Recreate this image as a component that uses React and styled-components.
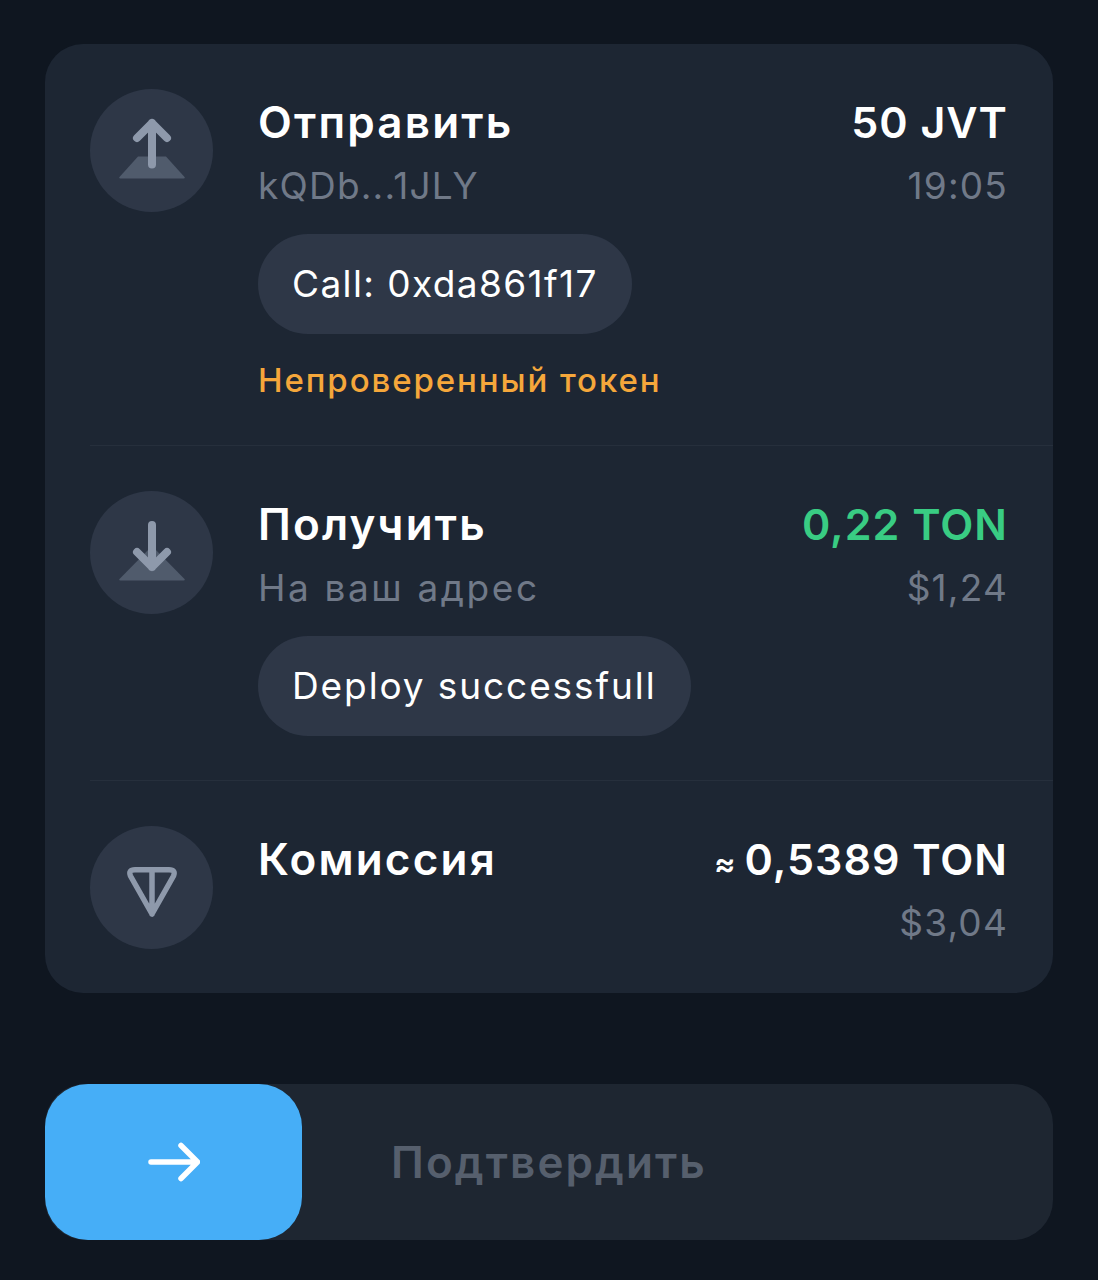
import React from 'react';
import styled, { createGlobalStyle } from 'styled-components';

const GlobalStyle = createGlobalStyle`
  html, body {
    margin: 0;
    padding: 0;
    background: #0f1620;
    font-family: 'Inter', 'Noto Sans', sans-serif;
  }
`;

const UpIcon = () => (
  <svg width="66" height="66" viewBox="0 0 66 66" fill="none">
    <path d="M19 38.5 H47 L65.5 59 Q66.5 60.5 64.5 60.5 H1.5 Q-0.5 60.5 0.5 59 Z" fill="#505b6c" />
    <path d="M33 46.5 V5 M18 20 L33 5 L48 20" stroke="#8e99ab" strokeWidth="8" strokeLinecap="round" strokeLinejoin="round" />
  </svg>
);

const DownIcon = () => (
  <svg width="66" height="66" viewBox="0 0 66 66" fill="none">
    <path d="M33 26 L65.5 59 Q66.5 60.5 64.5 60.5 H1.5 Q-0.5 60.5 0.5 59 Z" fill="#505b6c" />
    <path d="M33 5 V47 M18 32 L33 47 L48 32" stroke="#8e99ab" strokeWidth="8" strokeLinecap="round" strokeLinejoin="round" />
  </svg>
);

const TonIcon = () => (
  <svg width="50" height="60" viewBox="0 0 50 60" fill="none">
    <path d="M25 56 L3.5 18 Q1 11.7 8 11.7 H42 Q49 11.7 46.5 18 Z M25 11.7 V56" stroke="#8e99ab" strokeWidth="5.5" strokeLinejoin="round" strokeLinecap="round" />
  </svg>
);

const ArrowIcon = () => (
  <svg width="52" height="40" viewBox="0 0 52 40" fill="none">
    <path d="M3 20 H49 M33 3.5 L49.5 20 L33 36.5" stroke="#fff" strokeWidth="5.5" strokeLinecap="round" strokeLinejoin="round" />
  </svg>
);

const App = () => (
  <>
    <GlobalStyle />
    <Page>
      <Card>
        <Row $height={402}>
          <Circle><UpIcon /></Circle>
          <Info>
            <Top>
              <Title>Отправить</Title>
              <Amount>50 JVT</Amount>
            </Top>
            <Bottom>
              <Sub>kQDb...1JLY</Sub>
              <Sub>19:05</Sub>
            </Bottom>
            <Bubble>Call: 0xda861f17</Bubble>
            <Warning>Непроверенный токен</Warning>
          </Info>
        </Row>
        <Row $height={335}>
          <Circle><DownIcon /></Circle>
          <Info>
            <Top>
              <Title>Получить</Title>
              <Amount $green>0,22 TON</Amount>
            </Top>
            <Bottom>
              <Sub $wide>На ваш адрес</Sub>
              <Sub>$1,24</Sub>
            </Bottom>
            <Bubble $wide>Deploy successfull</Bubble>
          </Info>
        </Row>
        <Row $height={212} $last>
          <Circle><TonIcon /></Circle>
          <Info>
            <Top>
              <Title>Комиссия</Title>
              <Amount><Approx>≈</Approx>0,5389 TON</Amount>
            </Top>
            <Bottom>
              <span />
              <Sub>$3,04</Sub>
            </Bottom>
          </Info>
        </Row>
      </Card>
      <Slider>
        <Knob><ArrowIcon /></Knob>
        <SliderLabel>Подтвердить</SliderLabel>
      </Slider>
    </Page>
  </>
);

export default App;

const Page = styled.div`
  width: 1098px;
  height: 1280px;
  box-sizing: border-box;
  padding: 44px 45px 0;
  background: #0f1620;
`;

const Card = styled.div`
  background: #1d2633;
  border-radius: 38px;
  overflow: hidden;
`;

const Row = styled.div`
  position: relative;
  display: flex;
  height: ${(p) => p.$height}px;
  box-sizing: border-box;
  padding: 45px 45px 0;
  gap: 45px;

  &::after {
    content: '';
    display: ${(p) => (p.$last ? 'none' : 'block')};
    position: absolute;
    left: 45px;
    right: 0;
    bottom: 0;
    height: 1px;
    background: #262f3c;
  }
`;

const Circle = styled.div`
  flex: 0 0 123px;
  width: 123px;
  height: 123px;
  border-radius: 50%;
  background: #2e3747;
  display: flex;
  align-items: center;
  justify-content: center;
`;

const Info = styled.div`
  flex: 1;
  min-width: 0;
`;

const Top = styled.div`
  display: flex;
  justify-content: space-between;
  height: 66px;
  align-items: center;
`;

const Bottom = styled.div`
  display: flex;
  justify-content: space-between;
  height: 60px;
  align-items: center;
`;

const Title = styled.span`
  font-size: 44px;
  font-weight: 600;
  letter-spacing: 2.2px;
  color: #fff;
`;

const Amount = styled.span`
  font-size: 43px;
  font-weight: 600;
  letter-spacing: 1px;
  color: ${(p) => (p.$green ? '#39cc83' : '#fff')};
`;

const Approx = styled.span`
  font-size: 32px;
  margin-right: 8px;
`;

const Sub = styled.span`
  font-size: 37px;
  font-weight: 400;
  letter-spacing: ${(p) => (p.$wide ? '2.6px' : '1.2px')};
  color: #707988;
`;

const Bubble = styled.div`
  display: inline-block;
  margin-top: 19px;
  height: 100px;
  line-height: 100px;
  padding: 0 34px;
  border-radius: 50px;
  background: #2e3747;
  font-size: 37px;
  letter-spacing: ${(p) => (p.$wide ? '1.9px' : '1.4px')};
  color: #fff;
`;

const Warning = styled.div`
  margin-top: 26px;
  font-size: 33px;
  font-weight: 500;
  letter-spacing: 1.9px;
  color: #f5a73b;
`;

const Slider = styled.div`
  position: relative;
  margin-top: 91px;
  height: 156px;
  border-radius: 40px;
  background: #1e2631;
  display: flex;
  align-items: center;
  justify-content: center;
`;

const Knob = styled.div`
  position: absolute;
  left: 0;
  top: 0;
  width: 257px;
  height: 156px;
  border-radius: 43px;
  background: #46aef7;
  display: flex;
  align-items: center;
  justify-content: center;
`;

const SliderLabel = styled.span`
  font-size: 44px;
  font-weight: 600;
  letter-spacing: 2.1px;
  color: #565f6d;
`;
